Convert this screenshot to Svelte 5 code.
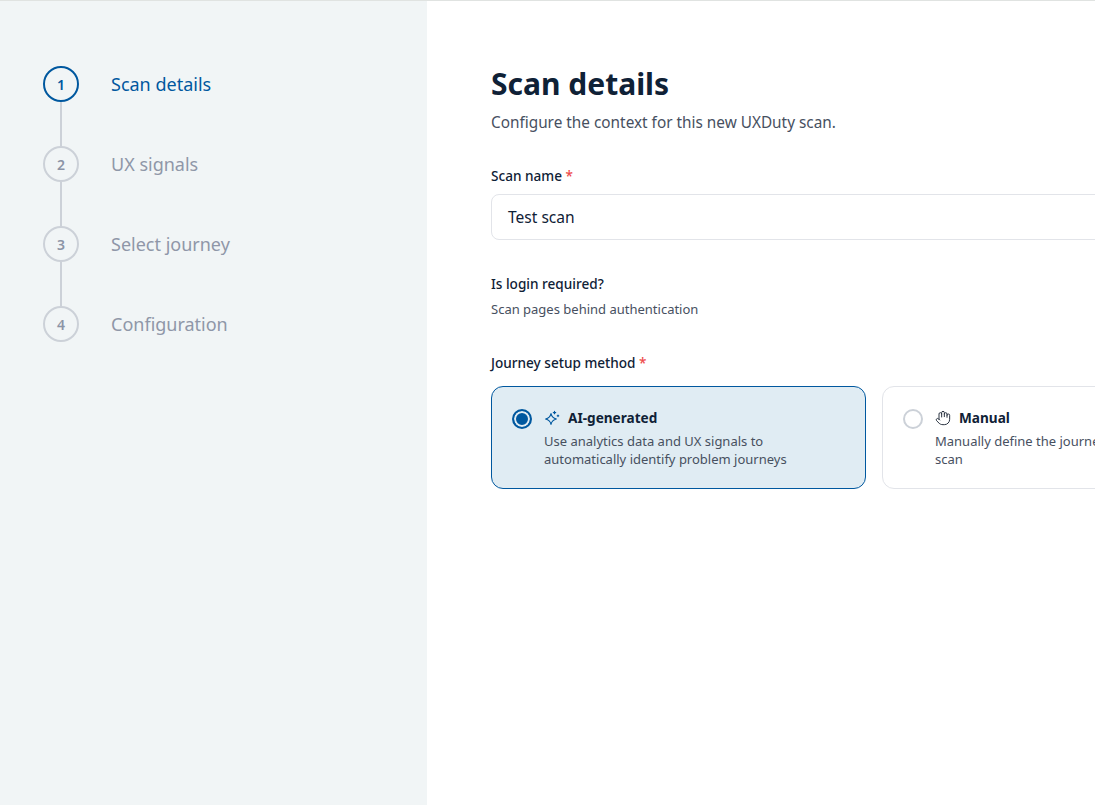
<script>
  const steps = [
    { n: 1, label: 'Scan details', active: true },
    { n: 2, label: 'UX signals' },
    { n: 3, label: 'Select journey' },
    { n: 4, label: 'Configuration' }
  ];
</script>

<div class="page">
  <aside class="sidebar">
    <ol class="steps">
      {#each steps as s, i}
        <li class="step" class:active={s.active}>
          <div class="marker">
            <span class="circle">{s.n}</span>
            {#if i < steps.length - 1}<span class="line"></span>{/if}
          </div>
          <span class="label">{s.label}</span>
        </li>
      {/each}
    </ol>
  </aside>
  <main class="main">
    <h1>Scan details</h1>
    <p class="sub">Configure the context for this new UXDuty scan.</p>

    <div class="field-label name-label">Scan name <span class="req">*</span></div>
    <div class="input">Test scan</div>

    <div class="field-label login-label">Is login required?</div>
    <p class="hint">Scan pages behind authentication</p>

    <div class="field-label method-label">Journey setup method <span class="req">*</span></div>
    <div class="cards">
      <div class="card selected">
        <span class="radio"></span>
        <div class="card-body">
          <div class="card-title">
            <svg class="icon ai" viewBox="0 0 16 16" fill="none" stroke="currentColor" stroke-width="1.1" stroke-linecap="round" stroke-linejoin="round">
              <path d="M7 3.6C7.6 6.5 9.5 8.4 12.4 9 9.5 9.6 7.6 11.5 7 14.4 6.4 11.5 4.5 9.6 1.6 9 4.5 8.4 6.4 6.5 7 3.6Z"/>
              <path d="M10.5 1.4v2.4"/><path d="M9.3 2.6h2.4"/><path d="M14 5v1.6"/><path d="M13.2 5.8h1.6"/>
            </svg>
            <span>AI-generated</span>
          </div>
          <p>Use analytics data and UX signals to automatically identify problem journeys</p>
        </div>
      </div>
      <div class="card">
        <span class="radio"></span>
        <div class="card-body">
          <div class="card-title">
            <svg class="icon hand" viewBox="0 0 24 24" fill="none" stroke="currentColor" stroke-width="1.5" stroke-linecap="round" stroke-linejoin="round">
              <path d="M18 11V6a2 2 0 0 0-2-2a2 2 0 0 0-2 2"/><path d="M14 10V4a2 2 0 0 0-2-2a2 2 0 0 0-2 2v2"/><path d="M10 10.5V6a2 2 0 0 0-2-2a2 2 0 0 0-2 2v8"/><path d="M18 8a2 2 0 1 1 4 0v6a8 8 0 0 1-8 8h-2c-2.8 0-4.5-.86-5.99-2.34l-3.6-3.6a2 2 0 0 1 2.83-2.82L7 15"/>
            </svg>
            <span>Manual</span>
          </div>
          <p>Manually define the journey steps for this new scan</p>
        </div>
      </div>
    </div>
  </main>
</div>

<style>
  :global(body) {
    margin: 0;
    overflow: hidden;
    background: #fff;
  }
  .page {
    display: flex;
    width: 1095px;
    height: 805px;
    overflow: hidden;
    border-top: 1px solid #e0e3e1;
    box-sizing: border-box;
    font-family: "Noto Sans", sans-serif;
    color: #0f2136;
  }
  .sidebar {
    flex: 0 0 427px;
    background: #f1f5f6;
    padding: 65px 0 0 43px;
    box-sizing: border-box;
  }
  .steps {
    list-style: none;
    margin: 0;
    padding: 0;
  }
  .step {
    display: flex;
    gap: 32px;
    height: 80px;
  }
  .marker {
    display: flex;
    flex-direction: column;
    align-items: center;
    width: 36px;
  }
  .circle {
    flex: none;
    box-sizing: border-box;
    width: 36px;
    height: 36px;
    border-radius: 50%;
    border: 2px solid #ccd1d8;
    display: flex;
    align-items: center;
    justify-content: center;
    font-size: 14px;
    font-weight: 600;
    color: #8c94a6;
  }
  .line {
    width: 2px;
    height: 44px;
    background: #ccd1d8;
  }
  .label {
    font-size: 18px;
    line-height: 36px;
    color: #8f97a8;
  }
  .active .circle {
    border-color: #00589f;
    color: #00589f;
  }
  .active .label {
    color: #00589f;
  }
  .main {
    flex: none;
    width: 766px;
    margin-left: 64px;
    padding-top: 62px;
  }
  h1 {
    margin: 0;
    font-size: 30px;
    line-height: 42px;
    font-weight: 700;
    color: #0f2136;
  }
  .sub {
    margin: 6px 0 0;
    font-size: 15.35px;
    line-height: 22px;
    color: #47505f;
  }
  .field-label {
    font-size: 13.6px;
    line-height: 20px;
    font-weight: 500;
    color: #0f2136;
  }
  .name-label {
    margin-top: 33px;
  }
  .req {
    color: #ee4b4b;
  }
  .input {
    margin-top: 8px;
    box-sizing: border-box;
    height: 46px;
    border: 1px solid #e2e4e9;
    border-radius: 8px;
    padding: 0 16px;
    display: flex;
    align-items: center;
    font-size: 15.55px;
    color: #0f2136;
  }
  .login-label {
    margin-top: 34px;
  }
  .hint {
    margin: 5px 0 0;
    font-size: 13px;
    line-height: 20px;
    color: #47505f;
  }
  .method-label {
    margin-top: 34px;
  }
  .cards {
    margin-top: 13px;
    display: grid;
    grid-template-columns: 375px 375px;
    gap: 16px;
  }
  .card {
    box-sizing: border-box;
    height: 103px;
    border: 1px solid #e2e4e9;
    border-radius: 12px;
    padding: 21px 20px;
    display: flex;
    gap: 12px;
  }
  .card.selected {
    background: #e0ecf3;
    border-color: #00589f;
  }
  .radio {
    flex: none;
    box-sizing: border-box;
    width: 20px;
    height: 20px;
    margin-top: 1px;
    border-radius: 50%;
    border: 2px solid #ccd1d8;
    background: #fff;
  }
  .selected .radio {
    border-color: #00589f;
    background: #00589f;
    box-shadow: inset 0 0 0 2px #e0ecf3;
  }
  .card-title {
    display: flex;
    align-items: center;
    gap: 8px;
    font-size: 13.6px;
    line-height: 20px;
    font-weight: 700;
    color: #0f2136;
  }
  .icon {
    flex: none;
    width: 16px;
    height: 16px;
    color: #2b3442;
  }
  .icon.ai {
    color: #00589f;
  }
  .icon.hand {
    width: 16px;
    height: 16px;
  }
  .card-body p {
    margin: 4px 0 0;
    font-size: 13px;
    line-height: 18px;
    color: #47505f;
  }
</style>
